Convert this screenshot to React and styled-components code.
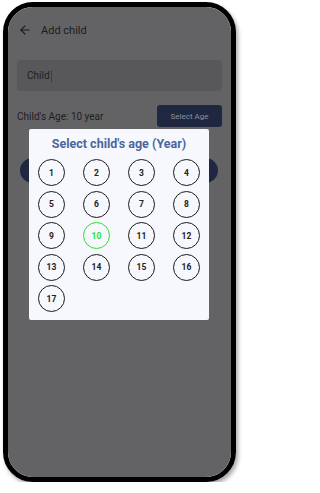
import React, { useState } from 'react';
import styled, { createGlobalStyle } from 'styled-components';
import { ArrowLeft } from 'lucide-react';

const GlobalStyle = createGlobalStyle`
  body {
    margin: 0;
    background: #ffffff;
    font-family: Roboto, "Liberation Sans", sans-serif;
  }
`;

const Phone = styled.div`
  width: 233px;
  height: 480px;
  margin: 2px 0 0 3px;
  box-sizing: border-box;
  border: 5px solid #000;
  border-radius: 30px;
  box-shadow: 2px 3px 4px rgba(0, 0, 0, 0.35);
  overflow: hidden;
`;

const Screen = styled.div`
  position: relative;
  height: 100%;
  background: #636365;
  display: flex;
  flex-direction: column;
`;

const Header = styled.div`
  display: flex;
  align-items: center;
  gap: 9px;
  height: 14px;
  margin-top: 16px;
  padding-left: 10px;
  color: #1c1c1e;
`;

const HeaderTitle = styled.span`
  font-size: 11px;
`;

const NameInput = styled.div`
  height: 31px;
  margin: 23px 9px 0;
  padding-left: 10px;
  border-radius: 4px;
  background: #58585b;
  display: flex;
  align-items: center;
  font-size: 10px;
  color: #1e1e20;
`;

const Caret = styled.span`
  width: 1px;
  height: 12px;
  margin-left: 1px;
  background: #2c3c66;
`;

const AgeRow = styled.div`
  display: flex;
  align-items: center;
  justify-content: space-between;
  margin: 14px 9px 0;
`;

const AgeText = styled.span`
  font-size: 10px;
  color: #1e1e20;
`;

const SelectButton = styled.div`
  width: 65px;
  height: 22px;
  border-radius: 3px;
  background: #1f2840;
  color: #8a909c;
  font-size: 8px;
  display: flex;
  align-items: center;
  justify-content: center;
`;

const PillButton = styled.div`
  height: 25px;
  margin: 31px 13px 0 12px;
  border-radius: 13px;
  background: #1f2840;
`;

const Modal = styled.div`
  position: absolute;
  left: 21px;
  top: 122px;
  width: 180px;
  box-sizing: border-box;
  padding: 7px 9px 8px;
  background: #f7f8fd;
  border-radius: 2px;
`;

const ModalTitle = styled.div`
  text-align: center;
  font-size: 12.5px;
  line-height: 15px;
  font-weight: 700;
  color: #4a66a0;
  margin-bottom: 8px;
`;

const AgeGrid = styled.div`
  display: grid;
  grid-template-columns: repeat(4, 27px);
  justify-content: space-between;
  row-gap: 4.5px;
`;

const AgeCircle = styled.div`
  width: 27px;
  height: 27px;
  box-sizing: border-box;
  border-radius: 50%;
  border: 1.5px solid ${(p) => (p.$active ? '#1ee81e' : '#1a1a1a')};
  color: ${(p) => (p.$active ? '#1ee81e' : '#222')};
  font-size: 8.5px;
  font-weight: 700;
  display: flex;
  align-items: center;
  justify-content: center;
`;

const ages = Array.from({ length: 17 }, (_, i) => i + 1);

export default function App() {
  const [age, setAge] = useState(10);

  return (
    <>
      <GlobalStyle />
      <Phone>
        <Screen>
          <Header>
            <ArrowLeft size={14} strokeWidth={2} />
            <HeaderTitle>Add child</HeaderTitle>
          </Header>
          <NameInput>
            Child
            <Caret />
          </NameInput>
          <AgeRow>
            <AgeText>Child's Age: {age} year</AgeText>
            <SelectButton>Select Age</SelectButton>
          </AgeRow>
          <PillButton />
          <Modal>
            <ModalTitle>Select child's age (Year)</ModalTitle>
            <AgeGrid>
              {ages.map((a) => (
                <AgeCircle key={a} $active={a === age} onClick={() => setAge(a)}>
                  {a}
                </AgeCircle>
              ))}
            </AgeGrid>
          </Modal>
        </Screen>
      </Phone>
    </>
  );
}
